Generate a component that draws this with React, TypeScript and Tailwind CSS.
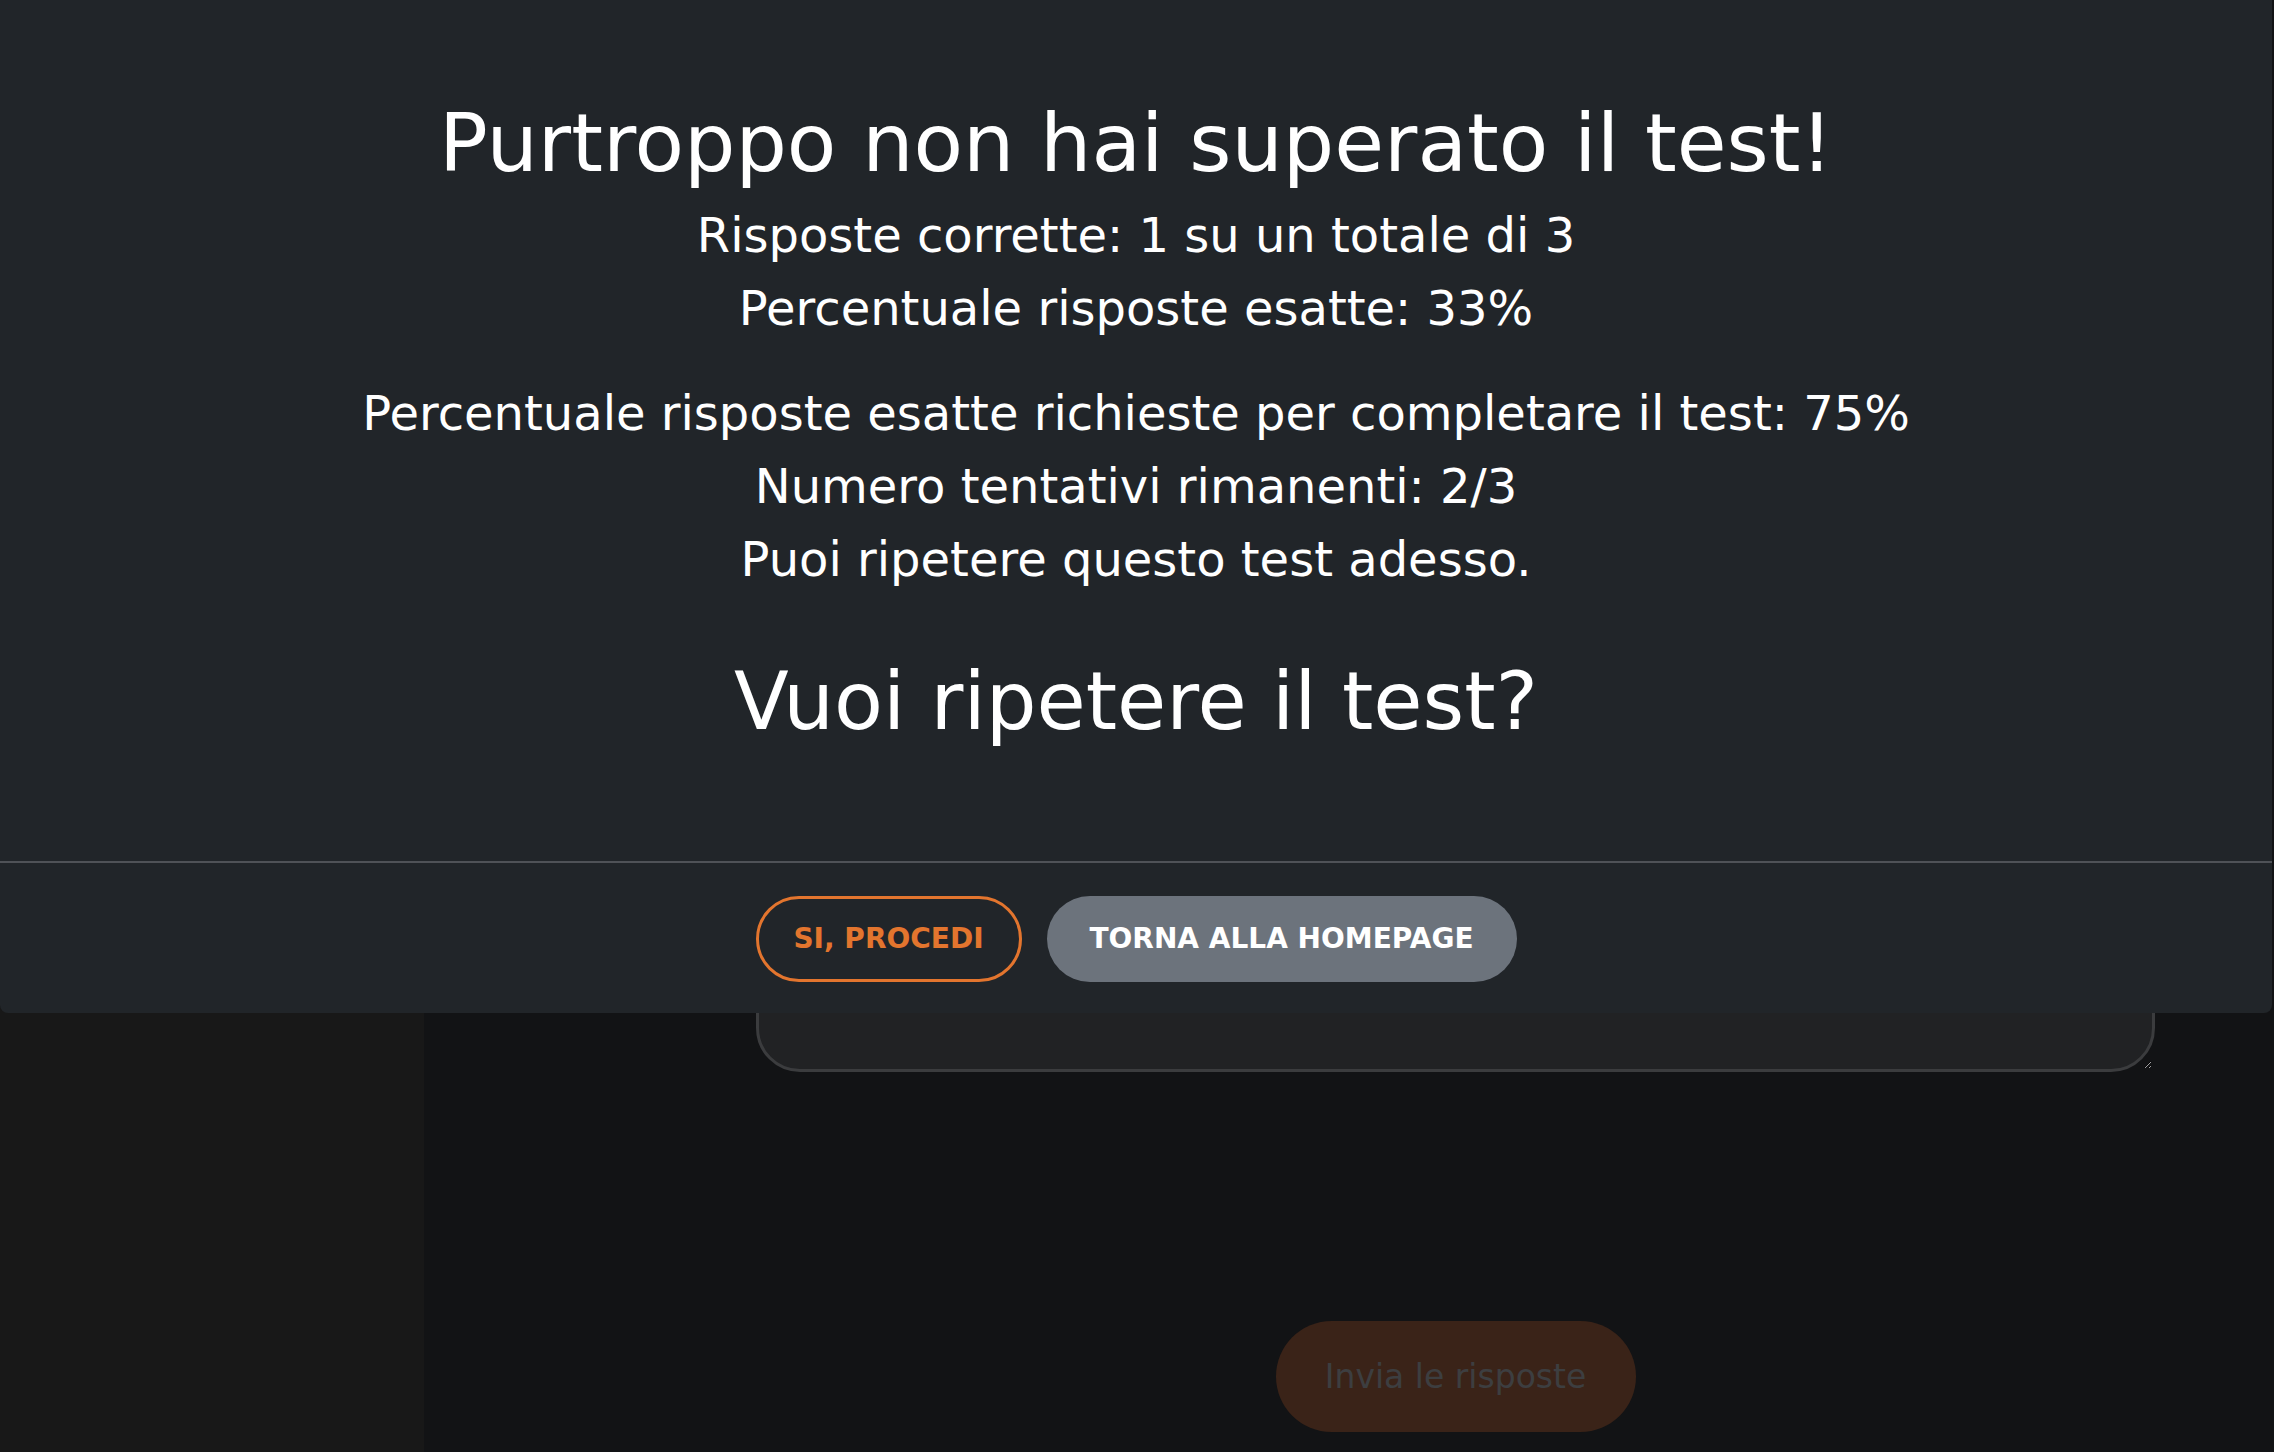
export default function App() {
  return (
    <div className="relative h-screen w-full overflow-hidden font-['DejaVu_Sans',sans-serif]">
      {/* pagina sotto il modal (già oscurata dal backdrop) */}
      <div className="flex h-full w-full">
        <aside className="w-[424px] shrink-0 bg-[#181818]" />
        <main className="flex-1 bg-[#121315] pl-[332px] pr-[119px] pt-[700px]">
          <textarea
            className="block h-[372px] w-full resize-y rounded-[44px] border-[3px] border-[#3b3c3e] bg-[#212224] outline-none"
            readOnly
          />
          <div className="mt-[249px] flex justify-center">
            <button className="flex h-[111px] w-[360px] items-center justify-center rounded-full bg-[#3a2318] text-[33px] text-[#3d3e40]">
              Invia le risposte
            </button>
          </div>
        </main>
      </div>

      {/* modal */}
      <div className="absolute left-0 top-0 w-[2272px] rounded-b-lg bg-[#212529] text-white">
        <div className="pb-[111px] pt-[95px] text-center">
          <h1 className="text-[81px] leading-[96px]">Purtroppo non hai superato il test!</h1>
          <p className="mt-[8px] text-[48px] leading-[73px]">Risposte corrette: 1 su un totale di 3</p>
          <p className="text-[48px] leading-[73px]">Percentuale risposte esatte: 33%</p>
          <p className="mt-[32px] text-[48px] leading-[73px]">
            Percentuale risposte esatte richieste per completare il test: 75%
          </p>
          <p className="text-[48px] leading-[73px]">Numero tentativi rimanenti: 2/3</p>
          <p className="text-[48px] leading-[73px]">Puoi ripetere questo test adesso.</p>
          <h2 className="mt-[58px] text-[80px] leading-[96px]">Vuoi ripetere il test?</h2>
        </div>
        <div className="flex justify-center gap-[25px] border-t-2 border-[#4f5257] pb-[31px] pt-[33px]">
          <button className="flex h-[86px] w-[266px] items-center justify-center rounded-full border-[3px] border-[#e3752e] text-[28px] font-bold text-[#e3752e]">
            SI, PROCEDI
          </button>
          <button className="flex h-[86px] w-[470px] items-center justify-center rounded-full bg-[#6c737c] text-[28px] font-bold text-white">
            TORNA ALLA HOMEPAGE
          </button>
        </div>
      </div>
    </div>
  );
}
